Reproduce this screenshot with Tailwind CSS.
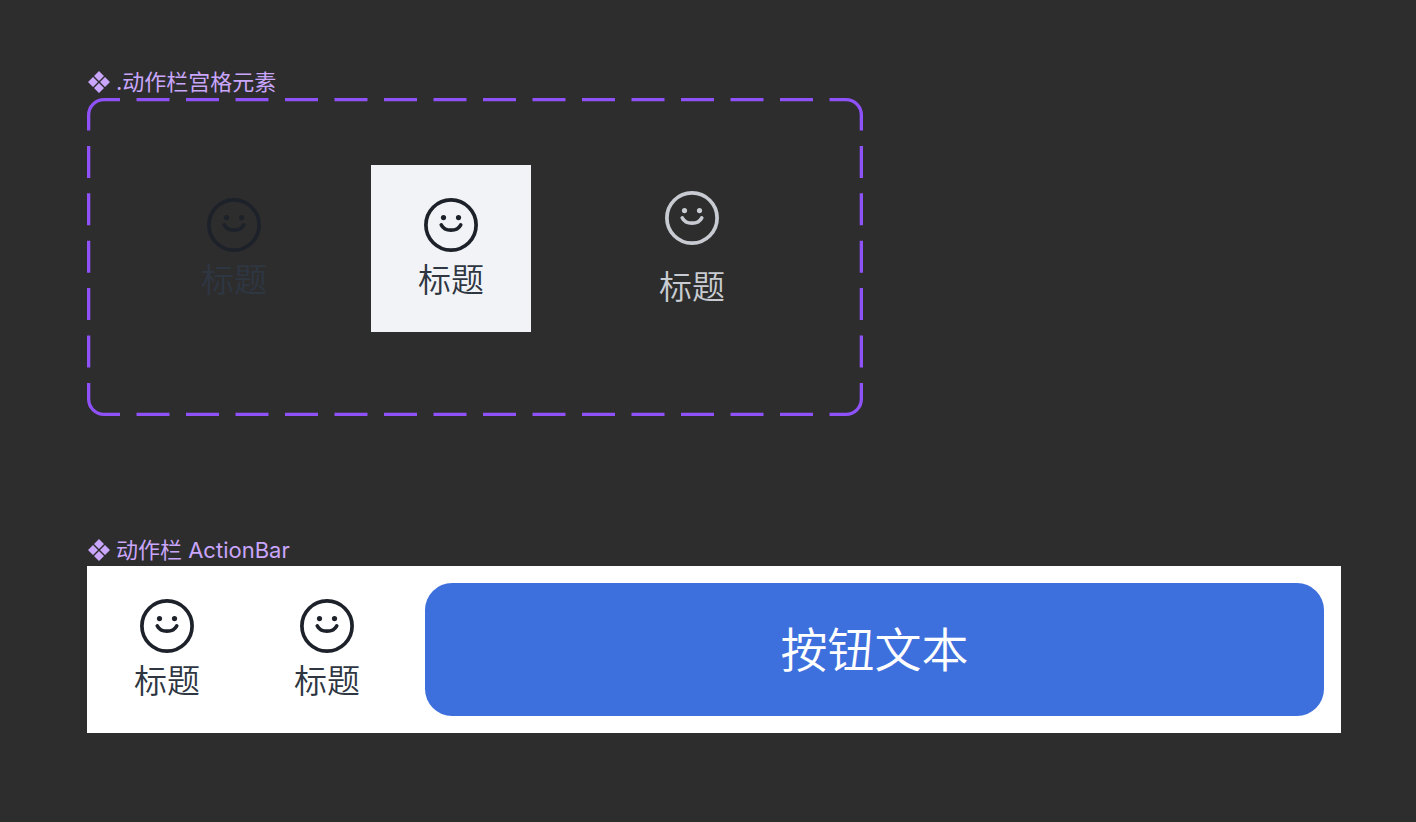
<!DOCTYPE html>
<html lang="zh-CN">
<head>
    <meta charset="UTF-8">
    <meta name="viewport" content="width=device-width, initial-scale=1.0">
    <title>动作栏 ActionBar</title>
    <script src="https://cdn.jsdelivr.net/npm/@tailwindcss/browser@4"></script>
</head>
<body class="bg-[#2d2d2d] min-h-screen font-['Inter','Noto_Sans_CJK_SC',sans-serif]">
    <!-- shared icons -->
    <svg class="hidden">
        <symbol id="smile" viewBox="0 0 54 54">
            <circle cx="27" cy="27" r="25.1" fill="none" stroke="currentColor" stroke-width="3.7"/>
            <circle cx="19.5" cy="19.6" r="2.6" fill="currentColor"/>
            <circle cx="34.5" cy="19.6" r="2.6" fill="currentColor"/>
            <path d="M17.3 27C19 30.3 22.7 32.2 27 32.2S35 30.3 36.7 27" fill="none" stroke="currentColor" stroke-width="3.7" stroke-linecap="round"/>
        </symbol>
        <symbol id="component" viewBox="0 0 22 22">
            <path d="M11 0L16 5L11 10L6 5ZM5 6L10 11L5 16L0 11ZM17 6L22 11L17 16L12 11ZM11 12L16 17L11 22L6 17Z" fill="currentColor"/>
        </symbol>
    </svg>

    <main class="pl-[87px] pr-[75px] pt-[66px] pb-10">
        <section>
            <h2 class="flex items-center gap-1.5 h-8 pl-px text-[22px] leading-8 text-[#c9a6fc]">
                <svg class="size-[22px]"><use href="#component"/></svg>
                .动作栏宫格元素
            </h2>
            <div class="relative w-fit px-[67px] pt-[67px] pb-[67px]">
                <!-- dashed frame -->
                <svg class="absolute inset-0 size-full" viewBox="0 0 776 318" preserveAspectRatio="none" fill="none" stroke="#8f51f8" stroke-width="3.3">
                    <path d="M0 1.65H776M0 316.35H776" stroke-dasharray="33 16.5" clip-path="url(#sides-x)"/>
                    <path d="M1.65 .5V317.5M774.35 .5V317.5" stroke-dasharray="32 15.4" clip-path="url(#sides-y)"/>
                    <path d="M1.65 17A15.35 15.35 0 0 1 17 1.65M759 1.65A15.35 15.35 0 0 1 774.35 17M774.35 301A15.35 15.35 0 0 1 759 316.35M17 316.35A15.35 15.35 0 0 1 1.65 301"/>
                    <clipPath id="sides-x"><rect x="17" width="742" height="318"/></clipPath>
                    <clipPath id="sides-y"><rect y="17" width="776" height="284"/></clipPath>
                </svg>
                <div class="relative flex items-start gap-[57px]">
                    <button class="flex flex-col items-center w-40 h-[167px] pt-[33px] gap-1 text-[#1d2129]">
                        <svg class="size-[54px]"><use href="#smile"/></svg>
                        <span class="text-[33px] leading-12 font-[350] text-[#2e3642]">标题</span>
                    </button>
                    <button class="flex flex-col items-center w-40 h-[167px] pt-[33px] gap-1 bg-[#f2f3f6] text-[#1d2129]">
                        <svg class="size-[54px]"><use href="#smile"/></svg>
                        <span class="text-[33px] leading-12 font-[350] text-[#2e3642]">标题</span>
                    </button>
                    <button disabled class="flex flex-col items-center w-52 h-[184px] pt-[26px] gap-[18px] text-[#c8ccd2]">
                        <svg class="size-[54px]"><use href="#smile"/></svg>
                        <span class="text-[33px] leading-12 font-[350]">标题</span>
                    </button>
                </div>
            </div>
        </section>

        <section class="mt-[118px]">
            <h2 class="flex items-center gap-1.5 h-8 pl-px text-[22px] leading-8 text-[#c9a6fc]">
                <svg class="size-[22px]"><use href="#component"/></svg>
                动作栏 ActionBar
            </h2>
            <div class="flex bg-white h-[167px]">
                <button class="flex flex-col items-center w-40 pt-[33px] gap-1 text-[#1d2129]">
                    <svg class="size-[54px]"><use href="#smile"/></svg>
                    <span class="text-[33px] leading-12 font-[350] text-[#2e3642]">标题</span>
                </button>
                <button class="flex flex-col items-center w-40 pt-[33px] gap-1 text-[#1d2129]">
                    <svg class="size-[54px]"><use href="#smile"/></svg>
                    <span class="text-[33px] leading-12 font-[350] text-[#2e3642]">标题</span>
                </button>
                <button class="flex-1 my-[17px] ml-[18px] mr-[17px] pt-0.5 rounded-[27px] bg-[#3e70dd] text-white text-[47px] font-[350]">按钮文本</button>
            </div>
        </section>
    </main>
</body>
</html>
